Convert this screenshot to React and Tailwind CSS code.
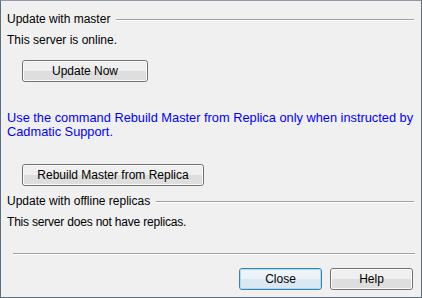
import React from "react";

function Btn({ children, w, focused }) {
  return (
    <div
      className={`h-[22px] rounded-[3px] border ${focused ? "border-[#3c7fb1]" : "border-[#707070]"} overflow-hidden flex`}
      style={{ width: w }}
    >
      <div
        className={`flex-1 rounded-[2px] border ${focused ? "border-[#a6dcf5]" : "border-[#fbfbfb]"} flex flex-col relative`}
      >
        <div className={`h-[9px] ${focused ? "bg-[#edf4f9]" : "bg-[#efefef]"}`}></div>
        <div className={`flex-1 ${focused ? "bg-[#d9e8f3]" : "bg-[#dedede]"}`}></div>
        <div className="absolute inset-0 flex items-center justify-center text-[12px] leading-[15px] text-black">
          {children}
        </div>
      </div>
    </div>
  );
}

function GroupHeader({ title }) {
  return (
    <div className="flex items-center h-[15px] pr-[7px]">
      <span className="leading-[15px]">{title}</span>
      <div className="flex-1 ml-[6px] mt-[1px] flex flex-col">
        <div className="h-px bg-[#a0a0a0]"></div>
        <div className="h-px bg-white"></div>
      </div>
    </div>
  );
}

export default function App() {
  return (
    <div
      className="w-[422px] h-[298px] bg-[#f0f0f0] border-l border-r border-b border-[#5f6e7d] border-t border-t-[#8f9aa5] text-[12px] leading-[15px] text-black flex flex-col"
      style={{ fontFamily: '"Liberation Sans", Arial, sans-serif' }}
    >
      <div className="pl-[6px] pt-[11px]">
        <GroupHeader title="Update with master" />
      </div>
      <div className="pl-[6px] mt-[6px]">This server is online.</div>
      <div className="pl-[21px] mt-[12px]">
        <Btn w="126px">Update Now</Btn>
      </div>
      <div className="pl-[6px] mt-[29px] text-[#0000ff] text-[12.8px] leading-[14px] pr-[4px]">
        Use the command Rebuild Master from Replica only when instructed by Cadmatic Support.
      </div>
      <div className="pl-[21px] mt-[25px]">
        <Btn w="182px">Rebuild Master from Replica</Btn>
      </div>
      <div className="pl-[6px] mt-[8px]">
        <GroupHeader title="Update with offline replicas" />
      </div>
      <div className="pl-[6px] mt-[6px] tracking-[-0.2px]">This server does not have replicas.</div>
      <div className="pl-[12px] pr-[6px] mt-[23px] flex flex-col">
        <div className="h-px bg-[#a0a0a0]"></div>
        <div className="h-px bg-white"></div>
      </div>
      <div className="flex justify-end gap-[8px] pr-[8px] mt-[13px]">
        <Btn w="83px" focused>
          Close
        </Btn>
        <Btn w="83px">Help</Btn>
      </div>
    </div>
  );
}
